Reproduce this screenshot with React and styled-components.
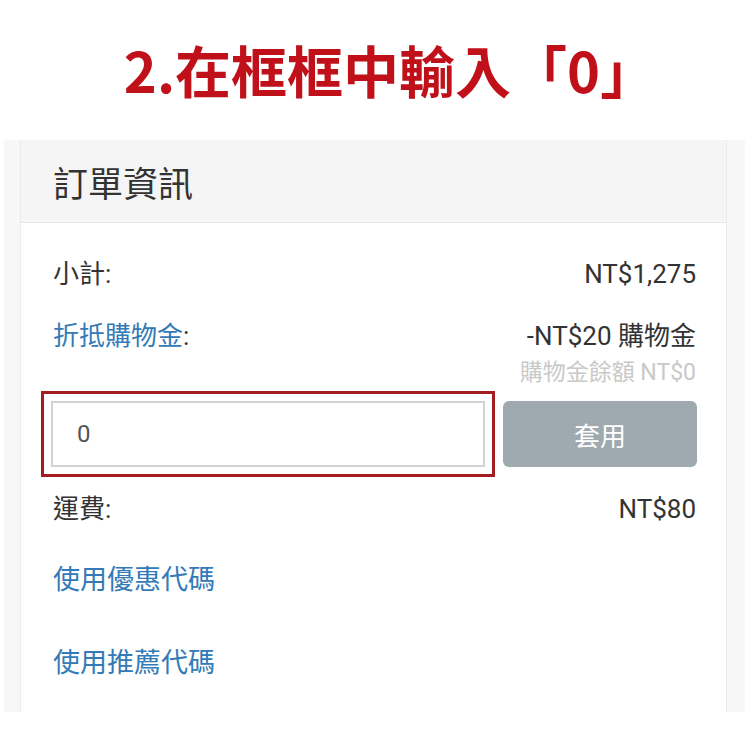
import * as React from 'react';
import styled, { createGlobalStyle } from 'styled-components';

const GlobalStyle = createGlobalStyle`
    html, body {
        margin: 0;
        padding: 0;
        background: #fff;
    }
    body {
        font-family: Roboto, "Noto Sans CJK TC", sans-serif;
        color: #333;
    }
`;

const Page = styled.div`
    width: 750px;
    height: 750px;
    overflow: hidden;
    display: flex;
    flex-direction: column;
`;

const Caption = styled.h1`
    box-sizing: border-box;
    margin: 0;
    height: 140px;
    padding: 0 0 4px 30px; /* the closing bracket's blank half pulls the text left */
    display: flex;
    align-items: center;
    justify-content: center;
    font-family: "Noto Sans CJK TC", "Noto Sans", sans-serif;
    font-weight: 700;
    font-size: 56px;
    color: #c0111a;
`;

/* grey phone-screen backdrop around the card */
const Screen = styled.div`
    margin: 0 5px 0 4px;
    padding: 0 18px 0 16px;
    height: 572px;
    background: #f7f7f9;
    display: flex;
`;

const Card = styled.section`
    flex: 1;
    background: #fff;
    border-left: 1px solid #ebebeb;
    border-right: 1px solid #ebebeb;
    display: flex;
    flex-direction: column;
`;

const CardHeader = styled.header`
    height: 82px;
    padding-left: 32px;
    display: flex;
    align-items: center;
    background: #f5f5f5;
    border-bottom: 1px solid #e6e6e6;
    font-family: "Noto Sans CJK TC", sans-serif;
    font-size: 35px;
    color: #333;
`;

const CardBody = styled.div`
    padding: 33px 30px 0 32px;
    display: flex;
    flex-direction: column;
`;

const Row = styled.div`
    display: flex;
    justify-content: space-between;
    align-items: center;
    font-size: 26px;
    line-height: 36px;
    margin-top: ${props => props.gap || 0}px;
`;

const Link = styled.span`
    color: #337ab7;
`;

const SubNote = styled.div`
    text-align: right;
    font-size: 23px;
    line-height: 28px;
    color: #c9c9c9;
    margin-top: 5px;
`;

const ApplyRow = styled.div`
    display: grid;
    grid-template-columns: 434px 1fr;
    gap: 18px;
    margin: 14px -1px 0 -2px;
    height: 66px;
`;

const CreditInput = styled.input`
    box-sizing: border-box;
    height: 66px;
    border: 2px solid #d2d2d2;
    padding: 0 24px;
    font-family: Roboto, sans-serif;
    font-size: 24px;
    color: #555;
    /* tutorial highlight */
    outline: 3px solid #a51b22;
    outline-offset: 7px;
`;

const ApplyButton = styled.button`
    border: none;
    border-radius: 6px;
    background: #9ea9b0;
    color: #fff;
    font-family: "Noto Sans CJK TC", sans-serif;
    font-size: 26px;
`;

const CodeLink = styled.div`
    font-size: 27px;
    line-height: 36px;
    color: #337ab7;
    margin-top: ${props => props.gap}px;
`;

export default function App() {
    return (
        <Page>
            <GlobalStyle />
            <Caption>2.在框框中輸入「0」</Caption>
            <Screen>
                <Card>
                    <CardHeader>訂單資訊</CardHeader>
                    <CardBody>
                        <Row>
                            <span>小計:</span>
                            <span>NT$1,275</span>
                        </Row>
                        <Row gap={26}>
                            <span>
                                <Link>折抵購物金</Link>:
                            </span>
                            <span>-NT$20 購物金</span>
                        </Row>
                        <SubNote>購物金餘額 NT$0</SubNote>
                        <ApplyRow>
                            <CreditInput defaultValue="0" />
                            <ApplyButton type="button">套用</ApplyButton>
                        </ApplyRow>
                        <Row gap={24}>
                            <span>運費:</span>
                            <span>NT$80</span>
                        </Row>
                        <CodeLink gap={35}>使用優惠代碼</CodeLink>
                        <CodeLink gap={47}>使用推薦代碼</CodeLink>
                    </CardBody>
                </Card>
            </Screen>
        </Page>
    );
}
